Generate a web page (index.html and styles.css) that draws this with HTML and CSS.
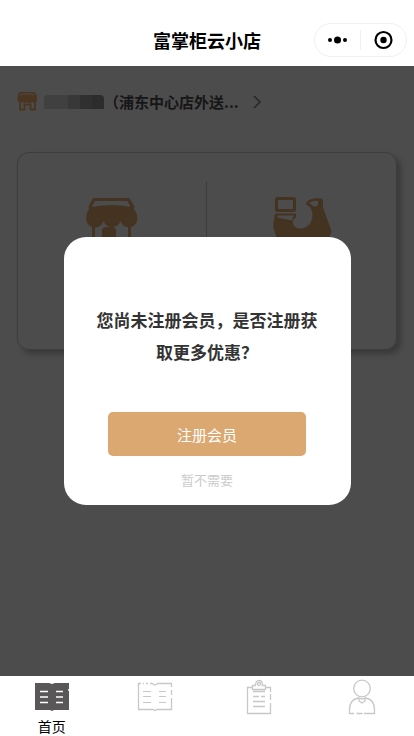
FILE: index.html
```html
<!DOCTYPE html>
<html lang="zh-CN">
<head>
<meta charset="utf-8">
<meta name="viewport" content="width=device-width, initial-scale=1">
<title>富掌柜云小店</title>
<link rel="stylesheet" href="styles.css">
</head>
<body>
<header class="topbar">
  <h1 class="title">富掌柜云小店</h1>
  <div class="capsule">
    <button class="capsule-btn" type="button" aria-label="更多">
      <svg width="20" height="20" viewBox="0 0 20 20"><circle cx="2" cy="10" r="2"/><circle cx="9.500" cy="10" r="3.500"/><circle cx="17" cy="10" r="2"/></svg>
    </button>
    <button class="capsule-btn" type="button" aria-label="关闭">
      <svg width="20" height="20" viewBox="0 0 20 20"><circle cx="9.500" cy="10" r="8" fill="none" stroke="#000" stroke-width="2.2"/><circle cx="9.500" cy="10" r="3.2"/></svg>
    </button>
  </div>
</header>
<main class="page">
  <a class="store" href="#store">
    <svg class="store-icon" width="21" height="22" viewBox="0 0 21 22">
      <path d="M3.500 1h13q2.500 0 3.500 4.500v3a3 3 0 0 1-5 2.500a3.500 3.500 0 0 1-4.700 0a3.500 3.500 0 0 1-4.700 0a3 3 0 0 1-5-2.500v-3q.500-4.500 3.500-4.500z" fill="currentColor"/>
      <path d="M3 4q7-2.500 14.500 0" fill="none" stroke="#4c4c4c" stroke-width="1.200"/>
      <path d="M3 11v7.500h4.500v-5h6v5H18V11" fill="none" stroke="currentColor" stroke-width="1.800"/>
    </svg>
    <span class="masked"></span>
    <span class="store-name">（浦东中心店外送...</span>
    <svg class="chevron" width="8" height="14" viewBox="0 0 8 14"><path d="M1 1l6 6-6 6" fill="none" stroke="currentColor" stroke-width="1.500"/></svg>
  </a>
  <section class="card">
    <div class="option">
      <svg width="54" height="56" viewBox="0 0 54 56">
        <path d="M8 2.500h36l8 15v2a8.500 8.500 0 0 1-16.500 4.500a9 9 0 0 1-17 0a8.500 8.500 0 0 1-17-4.500v-2z" fill="currentColor"/>
        <path d="M9.500 4h33l3 6q-18-4-39 0z" fill="#4c4c4c"/>
        <path d="M5 10l4-7.500h34.500L48 10M8.500 30v22.500h36V30" fill="none" stroke="currentColor" stroke-width="3" stroke-linecap="round" stroke-linejoin="round"/>
        <rect x="17" y="30" width="14" height="20" rx="4" fill="currentColor"/>
      </svg>
    </div>
    <div class="option">
      <svg width="60" height="56" viewBox="0 0 60 56">
        <rect x="4.500" y="1.500" width="18" height="12" rx="1" fill="none" stroke="currentColor" stroke-width="3"/>
        <path d="M3 16.500h21v4l-3 2c-1 5 2 9 7 9c9 0 14-8 12-17c-1-4-3-6-6-7c0-4 6-7 15-6q2 0 2 4v5l8 22q1 4-1 5v16H4V38q-4-7-2-15z" fill="currentColor"/>
        <path d="M6 18.500h16q-2 2-2 5l-15-3zM37 6q5-3 9-2v4q-2 2-4 1.500-2-2-5-3.500z" fill="#4c4c4c"/>
      </svg>
    </div>
  </section>
  <div class="mask">
    <div class="dialog" role="dialog" aria-modal="true" aria-labelledby="message">
      <p class="message" id="message">您尚未注册会员，是否注册获取更多优惠？</p>
      <button class="register" type="button">注册会员</button>
      <button class="dismiss" type="button">暂不需要</button>
    </div>
  </div>
</main>
<nav class="tabs">
  <a class="tab active" href="#home">
    <svg width="36" height="36" viewBox="0 0 36 36">
      <path d="M1 4h14l3 1 3-1h14v27H20l-2 1-2-1H1z" fill="#595757"/>
      <path d="M6 12.500h8M6 18h8M6 23.500h8M22 12.500h7M22 18h7M22 23.500h7M34 11h1" stroke="#fff" stroke-width="1.500"/>
      <path d="M16 3.500h4l-2 1z" fill="#fff"/>
    </svg>
    <span>首页</span>
  </a>
  <a class="tab" href="#menu" aria-label="菜单">
    <svg width="36" height="36" viewBox="0 0 36 36" fill="none" stroke="currentColor">
      <path d="M4 4.500H1.500v26H16l2 1 2-1h14.500V19M34.500 16v-5M34.500 8V4.500H21l-3 1.500-3-1.500h-2M6 4.500h1M9 4.500h2" stroke-width="1.300"/>
      <path d="M6 12.500h8M6 17.500h8M6 23.500h8M22 12.500h7M22 17.500h7M22 23.500h7"/>
    </svg>
  </a>
  <a class="tab" href="#orders" aria-label="订单">
    <svg width="36" height="36" viewBox="0 0 36 36" fill="none" stroke="currentColor" stroke-width="1.300">
      <path d="M11 8.500H6.500v26h23V24M29.500 21v-6M29.500 13V8.500H25M11.500 6.500h3q0-5 3.500-5t3.500 5h3v4h-13zM12 12.500h12M12 17.500h6M20 17.500h4M12 22.500h12M12 27.500h12"/>
      <circle cx="18" cy="5" r="1.500"/>
    </svg>
  </a>
  <a class="tab" href="#mine" aria-label="我的">
    <svg width="36" height="36" viewBox="0 0 36 36" fill="none" stroke="currentColor" stroke-width="1.300">
      <circle cx="18" cy="9.500" r="8.300"/>
      <path d="M12.500 34.500h6M20 34.500h10.500v-4q0-10-9-11.500M10 34.500H5.500v-4q0-10 9-11.500M15 19q3 2 6 0v3l-3 2-3-2z"/>
    </svg>
  </a>
</nav>
</body>
</html>
```
FILE: styles.css
```css
* { box-sizing: border-box; }
body {
  margin: 0;
  min-height: 100vh;
  display: flex;
  flex-direction: column;
  background: #fff;
  color: #000;
  font-family: "Noto Sans CJK SC", sans-serif;
}
button { border: 0; padding: 0; background: none; font: inherit; color: inherit; cursor: pointer; }
a { color: inherit; text-decoration: none; }
svg { display: block; flex: none; }

.topbar {
  display: grid;
  grid-template-columns: 1fr auto 1fr;
  align-items: center;
  height: 66px;
  padding: 16px 7px 2px;
}
.title {
  grid-column: 2;
  margin: 0;
  font-size: 18px;
  line-height: 26px;
  font-weight: 700;
}
.capsule {
  justify-self: end;
  display: flex;
  align-items: center;
  width: 93px;
  height: 34px;
  border: 1px solid #f0f0f0;
  border-radius: 17px;
}
.capsule-btn { flex: 1; display: flex; justify-content: center; }
.capsule-btn + .capsule-btn { border-left: 1px solid #f0f0f0; }

.page {
  position: relative;
  flex: 1;
  padding: 24px 17px;
  background: #4c4c4c;
}
.store { display: flex; align-items: center; height: 24px; }
.store-icon { color: #4a3520; }
.masked {
  width: 60px;
  height: 14px;
  margin-left: 6px;
  border-radius: 4px 4px 0 0;
  background: linear-gradient(90deg, #404040 40%, #383838 40% 60%, #303030 60% 80%, #2c2c2c 80%);
}
.store-name { font-size: 15px; line-height: 24px; font-weight: 700; color: #161616; }
.chevron { margin-left: 14px; color: #262626; }

.card {
  display: grid;
  grid-template-columns: 1fr 1fr;
  height: 198px;
  margin-top: 38px;
  padding: 28px 0;
  border: 1px solid #3c3c3c;
  border-radius: 12px;
  box-shadow: 4px 4px 5px #3a3a3a;
}
.option {
  display: flex;
  justify-content: center;
  padding-top: 16px;
  color: #453322;
}
.option:first-child { border-right: 1px solid #3c3c3c; }

.mask {
  position: absolute;
  inset: 0;
  display: flex;
  align-items: center;
  justify-content: center;
}
.dialog {
  display: flex;
  flex-direction: column;
  align-items: center;
  width: 70%;
  max-width: 287px;
  padding: 67px 32px 13px;
  border-radius: 22px;
  background: #fff;
}
.message {
  margin: 0;
  color: #333;
  font-size: 17px;
  line-height: 32px;
  font-weight: 700;
  text-align: center;
}
.register {
  width: 198px;
  height: 44px;
  margin-top: 44px;
  border-radius: 5px;
  background: #dba871;
  color: #fff;
  font-size: 15px;
}
.dismiss { margin-top: 12px; color: #ccc; font-size: 13px; line-height: 24px; }

.tabs { display: grid; grid-template-columns: repeat(4, 1fr); height: 60px; }
.tab {
  display: flex;
  flex-direction: column;
  align-items: center;
  gap: 3px;
  padding-top: 3px;
  color: #c8c8c8;
}
.tab.active { color: #000; }
.tab span { font-size: 14px; line-height: 16px; }
```
